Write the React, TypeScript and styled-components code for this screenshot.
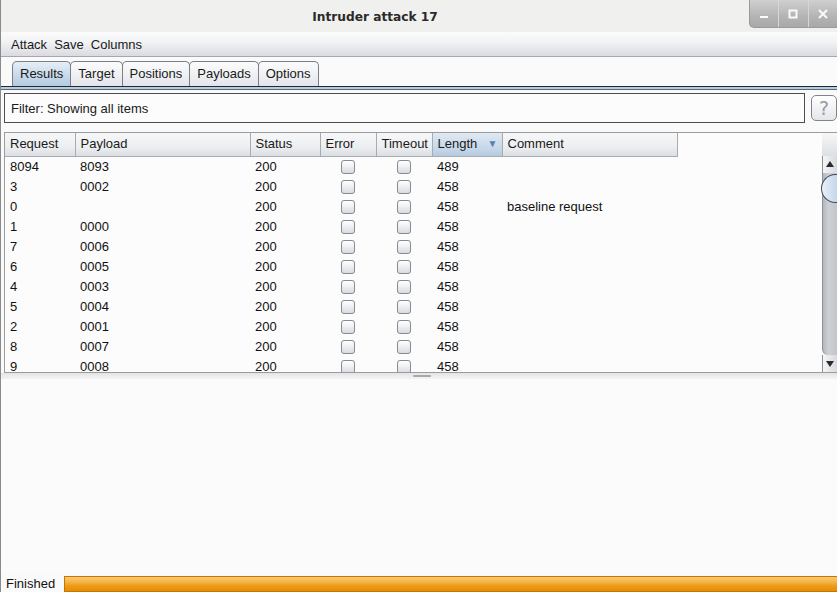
import React from "react";
import styled, { createGlobalStyle } from "styled-components";

const GlobalStyle = createGlobalStyle`
  html, body {
    margin: 0;
    padding: 0;
    background: #fafafa;
  }
  * {
    box-sizing: border-box;
  }
`;

interface Row {
  request: string;
  payload: string;
  status: string;
  length: string;
  comment: string;
}

const rows: Row[] = [
  { request: "8094", payload: "8093", status: "200", length: "489", comment: "" },
  { request: "3", payload: "0002", status: "200", length: "458", comment: "" },
  { request: "0", payload: "", status: "200", length: "458", comment: "baseline request" },
  { request: "1", payload: "0000", status: "200", length: "458", comment: "" },
  { request: "7", payload: "0006", status: "200", length: "458", comment: "" },
  { request: "6", payload: "0005", status: "200", length: "458", comment: "" },
  { request: "4", payload: "0003", status: "200", length: "458", comment: "" },
  { request: "5", payload: "0004", status: "200", length: "458", comment: "" },
  { request: "2", payload: "0001", status: "200", length: "458", comment: "" },
  { request: "8", payload: "0007", status: "200", length: "458", comment: "" },
  { request: "9", payload: "0008", status: "200", length: "458", comment: "" },
];

const columns = [
  { label: "Request", width: 70 },
  { label: "Payload", width: 175 },
  { label: "Status", width: 70 },
  { label: "Error", width: 56 },
  { label: "Timeout", width: 56 },
  { label: "Length", width: 70, sorted: true },
  { label: "Comment", width: 175 },
];

const Window = styled.div`
  width: 837px;
  height: 592px;
  display: flex;
  flex-direction: column;
  background: #fafafa;
  border-left: 1px solid #8a8a8a;
  font-family: "Liberation Sans", Arial, sans-serif;
  font-size: 13px;
  color: #111;
  overflow: hidden;
`;

const TitleBar = styled.div`
  height: 32px;
  flex: none;
  position: relative;
  display: flex;
  align-items: center;
  justify-content: center;
  padding-right: 88px;
  background: #f0f0ee;
`;

const Title = styled.div`
  font-family: "DejaVu Sans", sans-serif;
  font-weight: bold;
  font-size: 12.2px;
  color: #2a2a2a;
  padding-top: 1px;
`;

const WinButtons = styled.div`
  position: absolute;
  top: 0;
  right: 0;
  width: 88px;
  height: 28px;
  display: flex;
  background: linear-gradient(#d0d0d0, #b4b4b4 60%, #a8a8a8);
  border-left: 1px solid #9a9a9a;
  border-bottom: 1px solid #9a9a9a;
  border-bottom-left-radius: 5px;
`;

const WinButton = styled.div`
  flex: 1;
  display: flex;
  align-items: center;
  justify-content: center;
  & + & {
    border-left: 1px solid #d6d6d6;
  }
`;

const MenuBar = styled.div`
  height: 25px;
  flex: none;
  display: flex;
  align-items: center;
  padding-left: 7px;
  background: linear-gradient(#fbfbfc, #f2f3f5 40%, #d9dbe1);
  border-bottom: 1px solid #a4a6b0;
`;

const MenuItem = styled.div`
  padding: 0 3px;
  margin-right: 1px;
  color: #1a1a1a;
`;

const TabStrip = styled.div`
  height: 29px;
  flex: none;
  display: flex;
  align-items: flex-end;
  padding-left: 11px;
  background: #fafafa;
`;

const Tab = styled.div<{ $active?: boolean }>`
  height: 25px;
  padding: 0 7px 1px 7px;
  display: flex;
  align-items: center;
  border: 1px solid #7c7e86;
  border-bottom: none;
  border-radius: 5px 5px 0 0;
  margin-right: -1px;
  color: #1a1a1a;
  background: ${(p) =>
    p.$active
      ? "linear-gradient(#e6eef6, #c6d8ea 60%, #b4cade)"
      : "linear-gradient(#fcfcfd, #eeeff2 60%, #e2e4e8)"};
`;

const TabBody = styled.div`
  flex: 1;
  display: flex;
  flex-direction: column;
  border-top: 1px solid #1e2a36;
  background: #fafafa;
`;

const TabEdge = styled.div`
  height: 3px;
  flex: none;
  background: #b8cce0;
  border-bottom: 1px solid #5a6a7a;
`;

const FilterRow = styled.div`
  display: flex;
  align-items: center;
  padding: 3px 0 0 3px;
  gap: 6px;
  flex: none;
`;

const FilterBox = styled.div`
  width: 804px;
  height: 30px;
  display: flex;
  align-items: center;
  padding-left: 6px;
  background: #fcfcfc;
  border: 1px solid #4e4e4e;
  color: #1a1a1a;
`;

const HelpButton = styled.div`
  width: 26px;
  height: 26px;
  display: flex;
  align-items: center;
  justify-content: center;
  border: 1px solid #80848c;
  border-radius: 5px;
  background: linear-gradient(#ffffff, #e4e6ea);
  font-family: "DejaVu Sans", sans-serif;
  font-size: 19px;
  color: #9a9a9a;
`;

const TableArea = styled.div`
  margin: 9px 0 0 3px;
  height: 241px;
  flex: none;
  display: flex;
  border-left: 1px solid #9c9c9c;
  border-top: 1px solid #9c9c9c;
  border-bottom: 1px solid #9c9c9c;
  background: #fcfcfc;
`;

const Viewport = styled.div`
  flex: 1;
  overflow: hidden;
`;

const Table = styled.table`
  border-collapse: collapse;
  table-layout: fixed;
  width: 672px;
`;

const HeadCell = styled.th<{ $sorted?: boolean }>`
  height: 23px;
  padding: 0 0 2px 5px;
  text-align: left;
  font-weight: normal;
  color: #1a1a1a;
  border-right: 1px solid #a8acb2;
  border-bottom: 1px solid #a8acb2;
  background: ${(p) =>
    p.$sorted
      ? "linear-gradient(#dfe9f3, #c4d6e8 70%, #b6cade)"
      : "linear-gradient(#f6f7f8, #eceef0 60%, #dcdfe3)"};
  position: relative;
  white-space: nowrap;
`;

const SortArrow = styled.span`
  position: absolute;
  right: 4px;
  top: 5px;
  font-size: 10px;
  color: #5a80aa;
`;

const Cell = styled.td<{ $center?: boolean }>`
  height: 20px;
  padding: 0 0 0 5px;
  text-align: ${(p) => (p.$center ? "center" : "left")};
  white-space: nowrap;
  color: #111;
`;

const Check = styled.span`
  display: inline-block;
  vertical-align: middle;
  width: 14px;
  height: 14px;
  margin-left: -5px;
  border: 1px solid #868a92;
  border-radius: 3px;
  background: linear-gradient(#ffffff, #eceef1 50%, #d8dbe0);
`;

const ScrollBar = styled.div`
  width: 15px;
  flex: none;
  display: flex;
  flex-direction: column;
  background: #fafafa;
`;

const ScrollCorner = styled.div`
  height: 23px;
  flex: none;
  background: linear-gradient(#f6f7f8, #dcdfe3);
`;

const ScrollButton = styled.div`
  height: 17px;
  flex: none;
  display: flex;
  align-items: center;
  justify-content: center;
  border-left: 1px solid #8c9098;
  background: linear-gradient(90deg, #f4f5f6, #d8dadd);
`;

const Track = styled.div`
  flex: 1;
  position: relative;
  border-left: 1px solid #8c9098;
  background: linear-gradient(90deg, #b4b7bb, #cdd0d4 40%, #c2c4c8);
  border-bottom-left-radius: 6px;
`;

const Thumb = styled.div`
  position: absolute;
  top: 1px;
  left: -2px;
  right: 0;
  height: 29px;
  border: 1px solid #3e4e60;
  border-right: none;
  border-radius: 15px 0 0 15px;
  background: linear-gradient(90deg, #eaf1f8, #c2d6ea);
`;

const Divider = styled.div`
  height: 6px;
  flex: none;
  display: flex;
  justify-content: center;
  padding-left: 6px;
  background: linear-gradient(#e4e4e6, #f4f4f5);
`;

const Grip = styled.div`
  width: 18px;
  height: 2px;
  margin-top: 2px;
  border-radius: 1px;
  background: #a6a8ac;
`;

const LowerPane = styled.div`
  flex: 1;
  background: #fbfbfb;
`;

const StatusBar = styled.div`
  height: 20px;
  flex: none;
  display: flex;
  align-items: flex-end;
  background: #fafafa;
`;

const StatusLabel = styled.div`
  width: 63px;
  padding-left: 5px;
  padding-bottom: 1px;
  color: #111;
`;

const Progress = styled.div`
  flex: 1;
  height: 16px;
  border: 1px solid #c87400;
  border-right: none;
  background: linear-gradient(#f9c877, #f7b446 35%, #ec9a14 65%, #e58e08);
`;

function Arrow({ up }: { up?: boolean }) {
  return (
    <svg width="8" height="7" viewBox="0 0 8 7">
      <path d={up ? "M0 6 L4 0 L8 6 Z" : "M0 1 L4 7 L8 1 Z"} fill="#2a2a2a" />
    </svg>
  );
}

export default function App() {
  return (
    <>
      <GlobalStyle />
      <Window>
        <TitleBar>
          <Title>Intruder attack 17</Title>
          <WinButtons>
            <WinButton>
              <svg width="10" height="10" viewBox="0 0 10 10">
                <rect x="1" y="7" width="8" height="2" fill="#fafafa" />
              </svg>
            </WinButton>
            <WinButton>
              <svg width="10" height="10" viewBox="0 0 10 10">
                <rect x="1.5" y="1.5" width="7" height="7" fill="none" stroke="#fafafa" strokeWidth="2" />
              </svg>
            </WinButton>
            <WinButton>
              <svg width="10" height="10" viewBox="0 0 10 10">
                <path d="M1 1 L9 9 M9 1 L1 9" stroke="#fafafa" strokeWidth="2" />
              </svg>
            </WinButton>
          </WinButtons>
        </TitleBar>
        <MenuBar>
          <MenuItem>Attack</MenuItem>
          <MenuItem>Save</MenuItem>
          <MenuItem>Columns</MenuItem>
        </MenuBar>
        <TabStrip>
          <Tab $active>Results</Tab>
          <Tab>Target</Tab>
          <Tab>Positions</Tab>
          <Tab>Payloads</Tab>
          <Tab>Options</Tab>
        </TabStrip>
        <TabBody>
          <TabEdge />
          <FilterRow>
            <FilterBox>Filter: Showing all items</FilterBox>
            <HelpButton>?</HelpButton>
          </FilterRow>
          <TableArea>
            <Viewport>
              <Table>
                <colgroup>
                  {columns.map((c) => (
                    <col key={c.label} style={{ width: c.width }} />
                  ))}
                </colgroup>
                <thead>
                  <tr>
                    {columns.map((c) => (
                      <HeadCell key={c.label} $sorted={c.sorted}>
                        {c.label}
                        {c.sorted && <SortArrow>▼</SortArrow>}
                      </HeadCell>
                    ))}
                  </tr>
                </thead>
                <tbody>
                  {rows.map((r, i) => (
                    <tr key={i}>
                      <Cell>{r.request}</Cell>
                      <Cell>{r.payload}</Cell>
                      <Cell>{r.status}</Cell>
                      <Cell $center>
                        <Check />
                      </Cell>
                      <Cell $center>
                        <Check />
                      </Cell>
                      <Cell>{r.length}</Cell>
                      <Cell>{r.comment}</Cell>
                    </tr>
                  ))}
                </tbody>
              </Table>
            </Viewport>
            <ScrollBar>
              <ScrollCorner />
              <ScrollButton>
                <Arrow up />
              </ScrollButton>
              <Track>
                <Thumb />
              </Track>
              <ScrollButton>
                <Arrow />
              </ScrollButton>
            </ScrollBar>
          </TableArea>
          <Divider>
            <Grip />
          </Divider>
          <LowerPane />
        </TabBody>
        <StatusBar>
          <StatusLabel>Finished</StatusLabel>
          <Progress />
        </StatusBar>
      </Window>
    </>
  );
}
